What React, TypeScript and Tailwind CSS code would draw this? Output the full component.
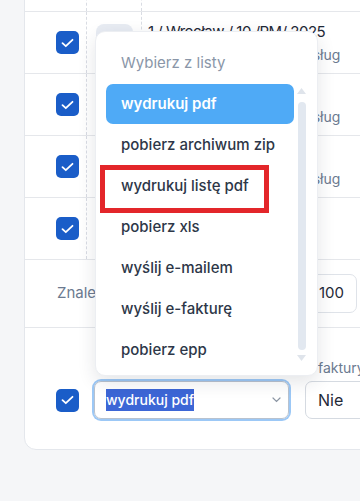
import React from 'react'

const rows = [
  { title: '1 / Wrocław / 10 /PM/ 2025', sub: 'Faktura VAT sprzedaży usług' },
  { title: '2 / Wrocław / 9 / 2025', sub: 'Faktura VAT sprzedaży usług' },
  { title: '3 / Opole / 8 / 2025', sub: 'Faktura VAT sprzedaży usług' },
  { title: '4 / Opole / 7 / 2025', sub: 'Sprzedaż towarów' },
]

const options = [
  'wydrukuj pdf',
  'pobierz archiwum zip',
  'wydrukuj listę pdf',
  'pobierz xls',
  'wyślij e-mailem',
  'wyślij e-fakturę',
  'pobierz epp',
]

function Checkbox() {
  return (
    <div className="w-[23px] h-[23px] rounded-[5px] bg-[#1a5dc8] flex items-center justify-center">
      <svg width="13" height="10" viewBox="0 0 13 10" fill="none">
        <polyline points="1.5,5.2 4.8,8.2 11.5,1.8" stroke="white" strokeWidth="1.8" strokeLinecap="round" strokeLinejoin="round" />
      </svg>
    </div>
  )
}

function Dropdown() {
  return (
    <div className="absolute left-[95px] top-[31px] w-[223px] h-[345px] rounded-[10px] bg-white border border-[#eceef2] shadow-[0_6px_18px_rgba(30,41,59,0.12)] flex">
      <div className="w-[198px] pl-[10px]">
        <div className="h-[52px] pt-[21px] pl-[15px] text-[15px] leading-5 text-[#8a96a8]">Wybierz z listy</div>
        <div className="flex flex-col gap-[1px]">
          {options.map((opt, i) => (
            <div
              key={opt}
              className={
                i === 0
                  ? 'h-10 flex items-center pl-[15px] rounded-[7px] bg-[#4faaf6] text-white font-semibold text-[15px]'
                  : 'h-10 flex items-center pl-[15px] text-[#2d3748] font-medium text-[15px]'
              }
            >
              {opt}
            </div>
          ))}
        </div>
      </div>
      {/* scrollbar */}
      <div className="ml-[3px] w-[9px] pt-[56px] flex flex-col items-center">
        <svg width="9" height="6" viewBox="0 0 9 6">
          <polygon points="4.5,0 9,6 0,6" fill="#dfe4eb" />
        </svg>
        <div className="mt-[8px] w-[8px] h-[248px] rounded-full bg-[#e2e8f0]" />
        <svg className="mt-[5px]" width="9" height="6" viewBox="0 0 9 6">
          <polygon points="0,0 9,0 4.5,6" fill="#dfe4eb" />
        </svg>
      </div>
    </div>
  )
}

export default function App() {
  return (
    <div className="relative h-[501px] w-[360px] overflow-hidden bg-[#f5f6f8] pl-6 font-['Inter',sans-serif]">
      <div className="-mt-[30px] w-[420px] bg-white border border-[#e4e7ec] rounded-bl-[12px]">
        {/* header row, mostly scrolled off */}
        <div className="flex h-[41px] border-b border-[#e5e7eb]">
          <div className="w-[61px]" />
          <div className="w-[55px] border-l border-dashed border-[#d9dce3]" />
          <div className="flex-1 border-l border-dashed border-[#d9dce3]" />
        </div>

        {rows.map((r) => (
          <div key={r.title} className="flex h-[62px] border-b border-[#e5e7eb]">
            <div className="w-[61px] pl-[31px] flex items-center">
              <Checkbox />
            </div>
            <div className="w-[55px] border-l border-dashed border-[#d9dce3] pl-[9px] flex items-center">
              <div className="w-[37px] h-[37px] rounded-[8px] bg-[#e8ecf3]" />
            </div>
            <div className="flex-1 border-l border-dashed border-[#d9dce3] pl-[6px] flex flex-col justify-center">
              <div className="text-[15px] leading-[23px] tracking-[-0.5px] text-[#1f2937] whitespace-nowrap">{r.title}</div>
              <div className="text-[14px] leading-[23px] text-[#6b7a90] whitespace-nowrap">{r.sub}</div>
            </div>
          </div>
        ))}

        {/* footer */}
        <div className="flex items-center h-[68px] border-b border-[#e5e7eb]">
          <div className="w-[280px] pl-[32px] text-[15px] text-[#6b7a90] whitespace-nowrap">Znaleziono 4 pozycje</div>
          <div className="w-[52px] h-[39px] border border-[#dfe3e9] rounded-[7px] pl-[13px] flex items-center text-[15px] text-[#1f2937]">
            100
          </div>
        </div>

        {/* bulk actions */}
        <div className="flex items-end pt-[32px] pb-[30px]">
          <div className="w-[61px] pl-[31px] h-[38px] flex items-center">
            <Checkbox />
          </div>
          <div className="pl-[8px]">
            <div className="w-[195px] h-[38px] rounded-[7px] border border-[#b8c2cf] ring-2 ring-[#9cc8f6] flex items-center pl-[11px] pr-[7px]">
              <span className="bg-[#3c66d6] text-white text-[14px] font-medium leading-[22px]">wydrukuj pdf</span>
              <svg className="ml-auto" width="9" height="6" viewBox="0 0 9 6" fill="none">
                <polyline points="1,1 4.5,4.5 8,1" stroke="#8b95a3" strokeWidth="1.2" strokeLinecap="round" />
              </svg>
            </div>
          </div>
          <div className="ml-[16px] flex flex-col">
            <div className="pl-[13px] text-[14px] leading-4 text-[#6b7a90] mb-[5px]">faktury</div>
            <div className="w-[120px] h-[38px] border border-[#d5dae1] rounded-[7px] pl-[12px] flex items-center text-[16px] text-[#1f2937]">
              Nie
            </div>
          </div>
        </div>
      </div>

      <Dropdown />

      {/* annotation */}
      <div className="absolute left-[100px] top-[165px] w-[169px] h-[48px] border-[5px] border-[#e3262a]" />
    </div>
  )
}
